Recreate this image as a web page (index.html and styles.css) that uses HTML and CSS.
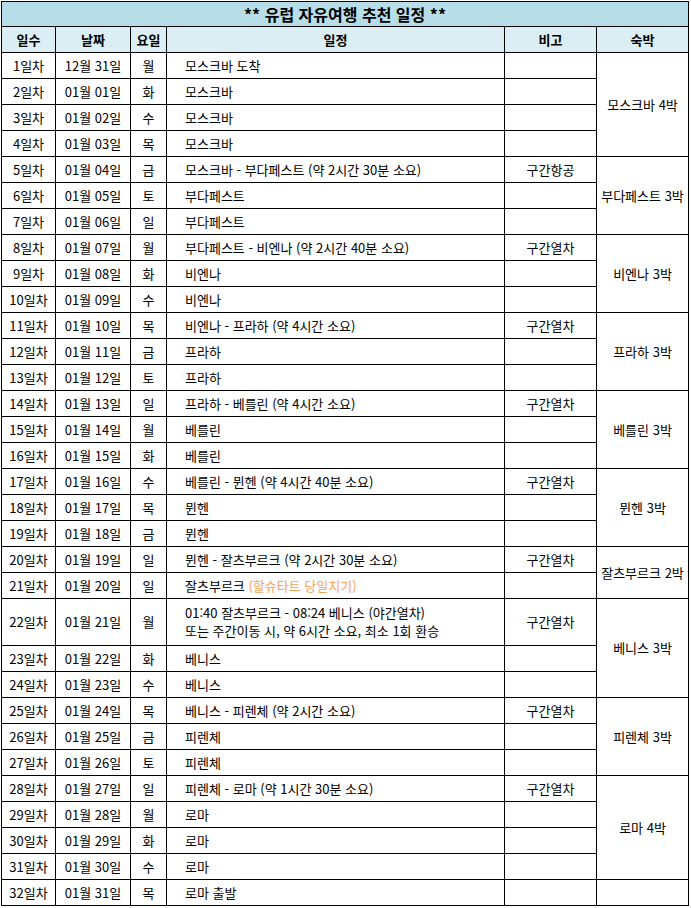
FILE: index.html
```html
<!DOCTYPE html>
<html lang="ko">
<head>
<meta charset="utf-8">
<link rel="stylesheet" href="styles.css">
</head>
<body>
<table class="plan">
<colgroup>
<col class="c-day"><col class="c-date"><col class="c-wd"><col class="c-sched"><col class="c-note"><col class="c-stay">
</colgroup>
<tr class="title"><td colspan="6">** 유럽 자유여행 추천 일정 **</td></tr>
<tr class="head"><td>일수</td><td>날짜</td><td>요일</td><td>일정</td><td>비고</td><td>숙박</td></tr>
<tr><td>1일차</td><td>12월 31일</td><td>월</td><td class="s">모스크바 도착</td><td></td><td rowspan="4">모스크바 4박</td></tr>
<tr><td>2일차</td><td>01월 01일</td><td>화</td><td class="s">모스크바</td><td></td></tr>
<tr><td>3일차</td><td>01월 02일</td><td>수</td><td class="s">모스크바</td><td></td></tr>
<tr><td>4일차</td><td>01월 03일</td><td>목</td><td class="s">모스크바</td><td></td></tr>
<tr><td>5일차</td><td>01월 04일</td><td>금</td><td class="s">모스크바 - 부다페스트 (약 2시간 30분 소요)</td><td>구간항공</td><td rowspan="3">부다페스트 3박</td></tr>
<tr><td>6일차</td><td>01월 05일</td><td>토</td><td class="s">부다페스트</td><td></td></tr>
<tr><td>7일차</td><td>01월 06일</td><td>일</td><td class="s">부다페스트</td><td></td></tr>
<tr><td>8일차</td><td>01월 07일</td><td>월</td><td class="s">부다페스트 - 비엔나 (약 2시간 40분 소요)</td><td>구간열차</td><td rowspan="3">비엔나 3박</td></tr>
<tr><td>9일차</td><td>01월 08일</td><td>화</td><td class="s">비엔나</td><td></td></tr>
<tr><td>10일차</td><td>01월 09일</td><td>수</td><td class="s">비엔나</td><td></td></tr>
<tr><td>11일차</td><td>01월 10일</td><td>목</td><td class="s">비엔나 - 프라하 (약 4시간 소요)</td><td>구간열차</td><td rowspan="3">프라하 3박</td></tr>
<tr><td>12일차</td><td>01월 11일</td><td>금</td><td class="s">프라하</td><td></td></tr>
<tr><td>13일차</td><td>01월 12일</td><td>토</td><td class="s">프라하</td><td></td></tr>
<tr><td>14일차</td><td>01월 13일</td><td>일</td><td class="s">프라하 - 베를린 (약 4시간 소요)</td><td>구간열차</td><td rowspan="3">베를린 3박</td></tr>
<tr><td>15일차</td><td>01월 14일</td><td>월</td><td class="s">베를린</td><td></td></tr>
<tr><td>16일차</td><td>01월 15일</td><td>화</td><td class="s">베를린</td><td></td></tr>
<tr><td>17일차</td><td>01월 16일</td><td>수</td><td class="s">베를린 - 뮌헨 (약 4시간 40분 소요)</td><td>구간열차</td><td rowspan="3">뮌헨 3박</td></tr>
<tr><td>18일차</td><td>01월 17일</td><td>목</td><td class="s">뮌헨</td><td></td></tr>
<tr><td>19일차</td><td>01월 18일</td><td>금</td><td class="s">뮌헨</td><td></td></tr>
<tr><td>20일차</td><td>01월 19일</td><td>일</td><td class="s">뮌헨 - 잘츠부르크 (약 2시간 30분 소요)</td><td>구간열차</td><td rowspan="2">잘츠부르크 2박</td></tr>
<tr><td>21일차</td><td>01월 20일</td><td>일</td><td class="s">잘츠부르크 <span class="hl">(할슈타트 당일치기)</span></td><td></td></tr>
<tr class="tall"><td>22일차</td><td>01월 21일</td><td>월</td><td class="s">01:40 잘츠부르크 - 08:24 베니스 (야간열차)<br>또는 주간이동 시, 약 6시간 소요, 최소 1회 환승</td><td>구간열차</td><td rowspan="3">베니스 3박</td></tr>
<tr><td>23일차</td><td>01월 22일</td><td>화</td><td class="s">베니스</td><td></td></tr>
<tr><td>24일차</td><td>01월 23일</td><td>수</td><td class="s">베니스</td><td></td></tr>
<tr><td>25일차</td><td>01월 24일</td><td>목</td><td class="s">베니스 - 피렌체 (약 2시간 소요)</td><td>구간열차</td><td rowspan="3">피렌체 3박</td></tr>
<tr><td>26일차</td><td>01월 25일</td><td>금</td><td class="s">피렌체</td><td></td></tr>
<tr><td>27일차</td><td>01월 26일</td><td>토</td><td class="s">피렌체</td><td></td></tr>
<tr><td>28일차</td><td>01월 27일</td><td>일</td><td class="s">피렌체 - 로마 (약 1시간 30분 소요)</td><td>구간열차</td><td rowspan="4">로마 4박</td></tr>
<tr><td>29일차</td><td>01월 28일</td><td>월</td><td class="s">로마</td><td></td></tr>
<tr><td>30일차</td><td>01월 29일</td><td>화</td><td class="s">로마</td><td></td></tr>
<tr><td>31일차</td><td>01월 30일</td><td>수</td><td class="s">로마</td><td></td></tr>
<tr><td>32일차</td><td>01월 31일</td><td>목</td><td class="s">로마 출발</td><td></td><td></td></tr>
</table>
</body>
</html>
```
FILE: styles.css
```css
html, body {
  margin: 0;
  padding: 0;
  background: #ffffff;
}
body {
  padding: 1px;
  font-family: "Noto Sans CJK KR", "Noto Sans", sans-serif;
  font-size: 13px;
  color: #000000;
}
.plan {
  border-collapse: collapse;
  table-layout: fixed;
  width: 688px;
}
.c-day { width: 54px; }
.c-date { width: 75px; }
.c-wd { width: 36px; }
.c-sched { width: 338px; }
.c-note { width: 92px; }
.c-stay { width: 92px; }
.plan td {
  border: 1px solid #000000;
  height: 25px;
  padding: 0;
  text-align: center;
  vertical-align: middle;
  line-height: 18px;
  white-space: nowrap;
}
.plan td.s {
  text-align: left;
  padding-left: 18px;
}
.plan .title td {
  background: #b7dee8;
  font-weight: bold;
  font-size: 16px;
  height: 24px;
}
.plan .head td {
  background: #daeef3;
  font-weight: bold;
  height: 25px;
}
.plan .tall td {
  height: 46px;
}
.hl {
  color: #f7a15a;
}
```
